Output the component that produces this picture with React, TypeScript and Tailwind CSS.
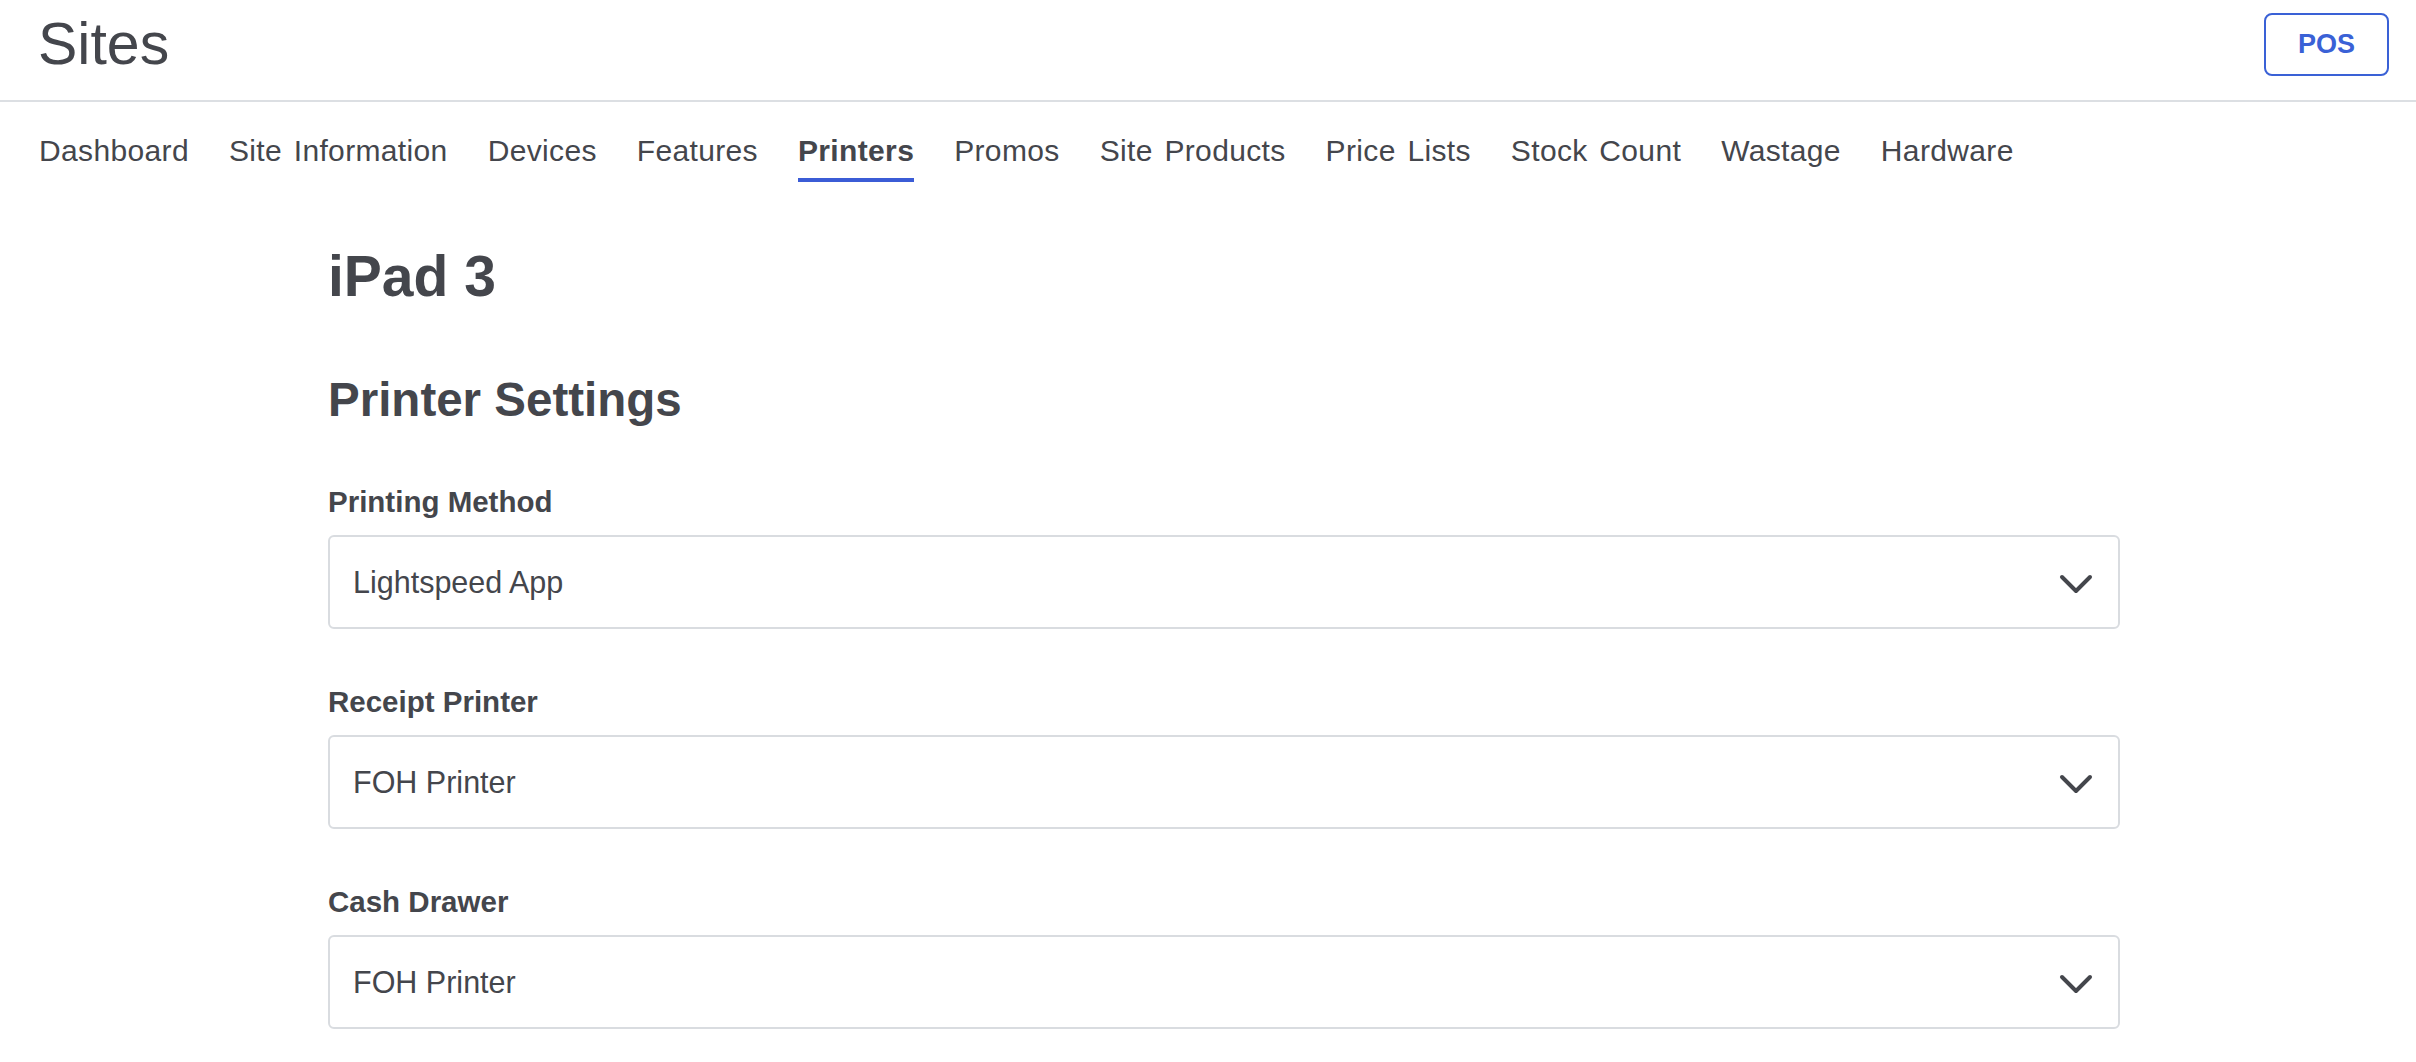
import React from "react";

const tabs = [
  "Dashboard",
  "Site Information",
  "Devices",
  "Features",
  "Printers",
  "Promos",
  "Site Products",
  "Price Lists",
  "Stock Count",
  "Wastage",
  "Hardware",
];

const fields = [
  { label: "Printing Method", value: "Lightspeed App" },
  { label: "Receipt Printer", value: "FOH Printer" },
  { label: "Cash Drawer", value: "FOH Printer" },
];

const Chevron: React.FC = () => (
  <svg width="34" height="20" viewBox="0 0 34 20" fill="none" className="shrink-0 mt-[4px]">
    <polyline
      points="3,3 17,17 31,3"
      stroke="#44464c"
      strokeWidth="4"
      strokeLinecap="round"
      strokeLinejoin="round"
    />
  </svg>
);

const SelectBox: React.FC<{ label: string; value: string }> = ({ label, value }) => (
  <div className="flex flex-col">
    <label className="text-[29.5px] leading-[28px] font-bold text-[#44464c]">{label}</label>
    <div className="mt-[19px] h-[94px] flex items-center justify-between rounded-[6px] border-2 border-[#d9dce0] bg-white pl-[23px] pr-[25px]">
      <span className="text-[30.5px] leading-[30px] text-[#44464c]">{value}</span>
      <Chevron />
    </div>
  </div>
);

export default function App() {
  return (
    <div className="min-h-screen bg-white font-['Liberation_Sans',Arial,sans-serif] text-[#44464c]">
      <header className="h-[102px] border-b-2 border-[#dcdfe3] flex items-center justify-between pl-[38px] pr-[27px] pb-[12px]">
        <h1 className="text-[59px] leading-[58px] font-normal">Sites</h1>
        <button
          type="button"
          className="w-[125px] h-[63px] rounded-[8px] border-2 border-[#3a61d6] text-[#3a61d6] text-[27px] font-bold"
        >
          POS
        </button>
      </header>

      {/* tabs */}
      <nav className="flex gap-10 px-[39px]">
        {tabs.map((tab) => (
          <div
            key={tab}
            className={
              tab === "Printers"
                ? "pt-[34px] pb-[12px] border-b-4 border-[#3b5cd6] text-[30px] leading-[30px] font-bold tracking-[0.35px] [word-spacing:3px]"
                : "pt-[34px] pb-[12px] border-b-4 border-transparent text-[30px] leading-[30px] tracking-[0.35px] [word-spacing:3px]"
            }
          >
            {tab}
          </div>
        ))}
      </nav>

      <main className="pl-[328px] w-[2120px] pb-10">
        <h2 className="mt-[66px] text-[57px] leading-[57px] font-bold">iPad 3</h2>
        <h3 className="mt-[71px] text-[47.5px] leading-[48px] font-bold">Printer Settings</h3>
        <div className="mt-[64px] flex flex-col gap-[59px]">
          {fields.map((f) => (
            <SelectBox key={f.label} label={f.label} value={f.value} />
          ))}
        </div>
      </main>
    </div>
  );
}
